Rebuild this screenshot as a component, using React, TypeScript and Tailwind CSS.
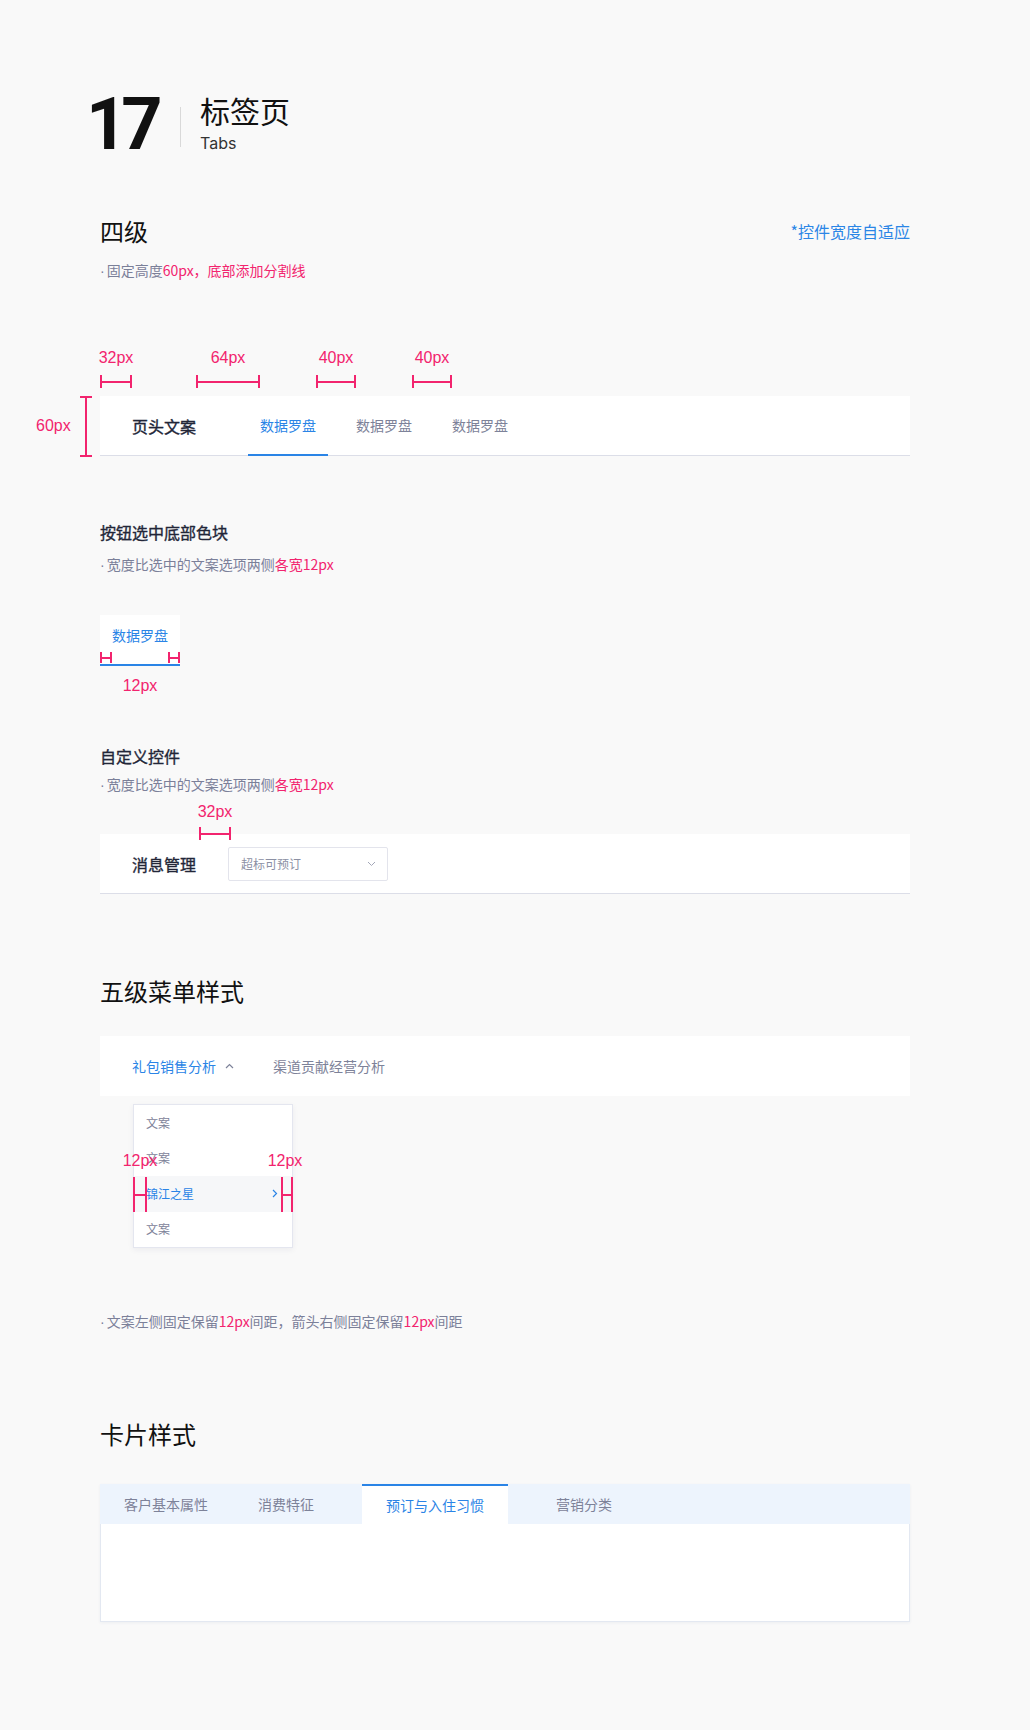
import React from "react";

function HBracket({ className }: { className: string }) {
  return (
    <div className={`absolute ${className}`}>
      <div className="absolute left-0 top-0 h-full w-[2px] bg-[#f2246e]" />
      <div className="absolute right-0 top-0 h-full w-[2px] bg-[#f2246e]" />
      <div className="absolute left-0 right-0 top-1/2 -translate-y-1/2 h-[2px] bg-[#f2246e]" />
    </div>
  );
}

function PxLabel({ className, children }: { className: string; children: React.ReactNode }) {
  return (
    <div
      className={`absolute text-center text-[16px] leading-[16px] text-[#f2246e] [font-family:'Liberation_Sans',Arial,sans-serif] ${className}`}
    >
      {children}
    </div>
  );
}

function Dot() {
  return <span className="[font-family:'Liberation_Sans',Arial,sans-serif] mr-[2px]">·</span>;
}

function ChevronUp() {
  return (
    <svg width="9" height="6" viewBox="0 0 9 6" fill="none">
      <polyline points="1,5 4.5,1.5 8,5" stroke="#7d8299" strokeWidth="1.2" />
    </svg>
  );
}

function ChevronDown() {
  return (
    <svg width="9" height="6" viewBox="0 0 9 6" fill="none">
      <polyline points="1,1 4.5,4.5 8,1" stroke="#a3a7b8" strokeWidth="1" />
    </svg>
  );
}

function ChevronRight() {
  return (
    <svg width="6" height="9" viewBox="0 0 6 9" fill="none">
      <polyline points="1,1 4.5,4.5 1,8" stroke="#2a84e6" strokeWidth="1.2" />
    </svg>
  );
}

export default function App() {
  return (
    <div className="w-[1030px] h-[1730px] bg-[#f9f9f9] overflow-hidden [font-family:'Noto_Sans_CJK_SC',sans-serif]">
      {/* Header */}
      <div className="flex items-start pt-[88px] pl-[86px] h-[162px]">
        <div className="w-[94px] h-[74px] text-[72px] leading-[74px] font-bold text-[#111111] [font-family:Roboto,sans-serif] tracking-[-6px]">
          17
        </div>
        <div className="mt-[19px] h-[40px] w-px bg-[#d9d9d9]" />
        <div className="ml-[19px] mt-[7px] flex flex-col">
          <div className="text-[30px] leading-[30px] text-[#111111]">标签页</div>
          <div className="mt-[10px] text-[16px] leading-[16px] text-[#333333] [font-family:Inter,sans-serif]">
            Tabs
          </div>
        </div>
      </div>

      <div className="ml-[100px] w-[810px]">
        {/* 四级 */}
        <div className="mt-[53px] h-[32px] flex items-center justify-between">
          <div className="text-[24px] leading-[32px] text-[#111111]">四级</div>
          <div className="text-[16px] leading-[32px] text-[#2b86e6]">*控件宽度自适应</div>
        </div>
        <div className="mt-[13px] h-[20px] text-[14px] leading-[20px] text-[#7b8099]">
          <Dot />固定高度<span className="text-[#f2246e]">60px，底部添加分割线</span>
        </div>

        {/* Dimension annotations */}
        <div className="relative mt-[70px] h-[46px]">
          <div className="absolute top-0 left-0 w-[32px] h-[38px]">
            <PxLabel className="-left-4 -right-4 top-0">32px</PxLabel>
            <HBracket className="left-0 right-0 top-[25px] h-[13px]" />
          </div>
          <div className="absolute top-0 left-[96px] w-[64px] h-[38px]">
            <PxLabel className="-left-4 -right-4 top-0">64px</PxLabel>
            <HBracket className="left-0 right-0 top-[25px] h-[13px]" />
          </div>
          <div className="absolute top-0 left-[216px] w-[40px] h-[38px]">
            <PxLabel className="-left-4 -right-4 top-0">40px</PxLabel>
            <HBracket className="left-0 right-0 top-[25px] h-[13px]" />
          </div>
          <div className="absolute top-0 left-[312px] w-[40px] h-[38px]">
            <PxLabel className="-left-4 -right-4 top-0">40px</PxLabel>
            <HBracket className="left-0 right-0 top-[25px] h-[13px]" />
          </div>
        </div>

        {/* Level 4 tab bar */}
        <div className="relative h-[60px] bg-white border-b border-[#dcdee8] flex items-stretch pl-8">
          <div className="absolute left-[-64px] top-0 h-full flex items-center text-[16px] leading-[16px] text-[#f2246e] [font-family:'Liberation_Sans',Arial,sans-serif]">
            60px
          </div>
          <div className="absolute left-[-20px] top-0 w-[12px] h-[61px]">
            <div className="absolute left-0 right-0 top-0 h-[2px] bg-[#f2246e]" />
            <div className="absolute left-0 right-0 bottom-0 h-[2px] bg-[#f2246e]" />
            <div className="absolute top-0 bottom-0 left-1/2 -translate-x-1/2 w-[2px] bg-[#f2246e]" />
          </div>
          <div className="flex items-center text-[16px] font-normal [-webkit-text-stroke:0.35px_#222638] text-[#222638]">
            页头文案
          </div>
          <div className="relative ml-[64px] flex items-center text-[14px] text-[#2a84e6]">
            数据罗盘
            <div className="absolute -left-3 -right-3 bottom-[-1px] h-[2px] bg-[#2a84e6]" />
          </div>
          <div className="ml-[40px] flex items-center text-[14px] text-[#7d8299]">数据罗盘</div>
          <div className="ml-[40px] flex items-center text-[14px] text-[#7d8299]">数据罗盘</div>
        </div>

        {/* 按钮选中底部色块 */}
        <div className="mt-[64px] h-[24px] text-[16px] leading-[24px] font-normal [-webkit-text-stroke:0.35px_#222638] text-[#222638]">
          按钮选中底部色块
        </div>
        <div className="mt-[10px] h-[20px] text-[14px] leading-[20px] text-[#7b8099]">
          <Dot />宽度比选中的文案选项两侧<span className="text-[#f2246e]">各宽12px</span>
        </div>
        <div className="relative mt-[41px] w-[80px] h-[51px] bg-white">
          <div className="h-[41px] flex items-center justify-center text-[14px] text-[#2a84e6]">数据罗盘</div>
          <div className="absolute left-0 right-0 bottom-0 h-[2px] bg-[#2a84e6]" />
          <HBracket className="left-0 top-[37px] w-[12px] h-[11px]" />
          <HBracket className="right-0 top-[37px] w-[12px] h-[11px]" />
        </div>
        <div className="mt-[12px] w-[80px] h-[16px] text-center text-[16px] leading-[16px] text-[#f2246e] [font-family:'Liberation_Sans',Arial,sans-serif]">
          12px
        </div>

        {/* 自定义控件 */}
        <div className="mt-[50px] h-[24px] text-[16px] leading-[24px] font-normal [-webkit-text-stroke:0.35px_#222638] text-[#222638]">
          自定义控件
        </div>
        <div className="mt-[6px] h-[20px] text-[14px] leading-[20px] text-[#7b8099]">
          <Dot />宽度比选中的文案选项两侧<span className="text-[#f2246e]">各宽12px</span>
        </div>
        <div className="relative mt-[10px] h-[16px]">
          <div className="absolute top-0 left-[99px] w-[32px] h-[36px]">
            <PxLabel className="-left-4 -right-4 top-0">32px</PxLabel>
            <HBracket className="left-0 right-0 top-[23px] h-[13px]" />
          </div>
        </div>
        <div className="mt-[14px] h-[60px] bg-white border-b border-[#dcdee8] flex items-center pl-8">
          <div className="text-[16px] font-normal [-webkit-text-stroke:0.35px_#222638] text-[#222638]">消息管理</div>
          <div className="ml-8 w-[160px] h-[34px] border border-[#e3e4ec] rounded-[2px] flex items-center justify-between pl-3 pr-[11px]">
            <span className="text-[12px] text-[#8c90a4]">超标可预订</span>
            <ChevronDown />
          </div>
        </div>

        {/* 五级菜单样式 */}
        <div className="mt-[81px] h-[32px] text-[24px] leading-[32px] text-[#111111]">五级菜单样式</div>
        <div className="mt-[29px] h-[60px] bg-white flex items-center pl-8">
          <span className="text-[14px] text-[#2a84e6]">礼包销售分析</span>
          <span className="ml-[9px] flex items-center">
            <ChevronUp />
          </span>
          <span className="ml-[39px] text-[14px] text-[#7d8299]">渠道贡献经营分析</span>
        </div>
        <div className="relative mt-[8px] h-[144px]">
          <div className="ml-[33px] w-[160px] h-[144px] bg-white border border-[#e4e6ef] shadow-[0_2px_6px_rgba(30,40,80,0.06)] flex flex-col">
            <div className="h-[35.5px] flex items-center pl-3 text-[12px] text-[#7d8299]">文案</div>
            <div className="h-[35.5px] flex items-center pl-3 text-[12px] text-[#7d8299]">文案</div>
            <div className="h-[35.5px] flex items-center justify-between pl-3 pr-[14px] bg-[#f6f7f9] text-[12px] text-[#2a84e6]">
              <span>锦江之星</span>
              <ChevronRight />
            </div>
            <div className="h-[35.5px] flex items-center pl-3 text-[12px] text-[#7d8299]">文案</div>
          </div>
          <PxLabel className="left-[22px] w-[36px] top-[49px]">12px</PxLabel>
          <PxLabel className="left-[167px] w-[36px] top-[49px]">12px</PxLabel>
          <HBracket className="left-[33px] top-[73px] w-[14px] h-[35px]" />
          <HBracket className="left-[181px] top-[73px] w-[12px] h-[35px]" />
        </div>
        <div className="mt-[63px] h-[20px] text-[14px] leading-[20px] text-[#7b8099]">
          <Dot />文案左侧固定保留<span className="text-[#f2246e]">12px</span>间距，箭头右侧固定保留
          <span className="text-[#f2246e]">12px</span>间距
        </div>

        {/* 卡片样式 */}
        <div className="mt-[87px] h-[32px] text-[24px] leading-[32px] text-[#111111]">卡片样式</div>
        <div className="mt-[34px] shadow-[0_1px_3px_rgba(30,60,120,0.06)]">
          <div className="h-[40px] bg-[#edf4fd] flex items-stretch text-[14px] text-[#7d8299]">
            <div className="px-6 flex items-center">客户基本属性</div>
            <div className="pl-[26px] pr-[48px] flex items-center">消费特征</div>
            <div className="w-[146px] bg-white border-t-2 border-[#2a84e6] flex items-center justify-center text-[#2a84e6]">
              预订与入住习惯
            </div>
            <div className="pl-[48px] flex items-center">营销分类</div>
          </div>
          <div className="h-[98px] bg-white border-x border-b border-[#e3e8f1]" />
        </div>
      </div>
    </div>
  );
}
